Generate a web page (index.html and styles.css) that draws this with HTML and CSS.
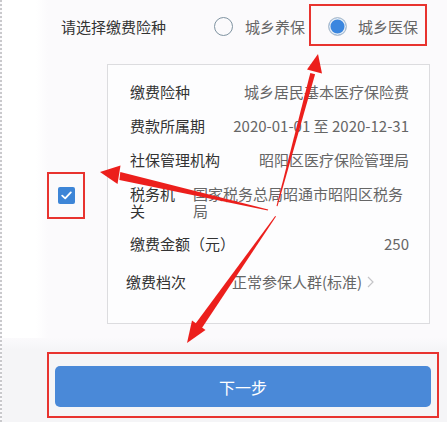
FILE: index.html
```html
<!DOCTYPE html>
<html lang="zh-CN">
<head>
<meta charset="utf-8">
<link rel="stylesheet" href="styles.css">
</head>
<body>
<div class="page">
  <div class="header">
    <span class="question">请选择缴费险种</span>
    <div class="opt">
      <span class="radio"></span>
      <span class="opt-label">城乡养保</span>
    </div>
    <div class="opt opt-marked">
      <span class="radio radio-on"></span>
      <span class="opt-label">城乡医保</span>
    </div>
  </div>

  <div class="middle">
    <div class="check-mark">
      <span class="checkbox">
        <svg width="11" height="9" viewBox="0 0 11 9"><path d="M1.2 4.6 L4.2 7.4 L9.8 1.4" fill="none" stroke="#fff" stroke-width="1.8" stroke-linecap="round" stroke-linejoin="round"/></svg>
      </span>
    </div>
    <div class="card">
      <div class="row">
        <span class="label">缴费险种</span>
        <span class="value">城乡居民基本医疗保险费</span>
      </div>
      <div class="row">
        <span class="label">费款所属期</span>
        <span class="value">2020-01-01 至 2020-12-31</span>
      </div>
      <div class="row">
        <span class="label">社保管理机构</span>
        <span class="value">昭阳区医疗保险管理局</span>
      </div>
      <div class="row row-wrap">
        <span class="label label-narrow">税务机关</span>
        <span class="value value-left">国家税务总局昭通市昭阳区税务局</span>
      </div>
      <div class="row">
        <span class="label">缴费金额（元）</span>
        <span class="value">250</span>
      </div>
      <div class="row row-grade">
        <span class="label">缴费档次</span>
        <span class="value grade-value">正常参保人群(标准)</span>
        <svg class="chevron" width="7" height="12" viewBox="0 0 7 12"><path d="M1 1 L6 6 L1 11" fill="none" stroke="#c4c4c8" stroke-width="1.2"/></svg>
      </div>
    </div>
  </div>

  <div class="footer">
    <div class="btn-mark">
      <button class="btn">下一步</button>
    </div>
  </div>

  <svg class="arrows" width="447" height="422" viewBox="0 0 447 422">
    <g fill="#ec1f1c">
      <polygon points="276.5,206 277.5,206.3 315.1,74.3 310.3,73 "/>
      <polygon points="318,54 322,73.5 307,69.5"/>
      <polygon points="268.2,209.5 267.8,210.5 119.4,180 120.3,172"/>
      <polygon points="100,172 120.5,165.5 117.5,184"/>
      <polygon points="276,216.5 275.2,216 195.6,323.5 201.6,328.4"/>
      <polygon points="187,343 192,320.5 205.5,330"/>
    </g>
  </svg>
</div>
</body>
</html>
```

FILE: styles.css
```css
* {
  box-sizing: border-box;
}

html, body {
  margin: 0;
  padding: 0;
  background: #ffffff;
}

.page {
  position: relative;
  width: 447px;
  height: 422px;
  overflow: hidden;
  border-left: 2px dotted #c9c9cc;
  background: linear-gradient(to right, #ffffff 0px, #ffffff 34px, #fbfafc 46px, #fbfafc 100%);
  font-family: "Noto Sans CJK SC", "Noto Sans", sans-serif;
  font-size: 15px;
  color: #333;
}

/* header */
.header {
  display: flex;
  align-items: center;
  padding: 4px 0 0 59px;
  height: 46px;
}

.question {
  color: #333;
  line-height: 20px;
  margin-top: 3px;
  width: 105px;
  white-space: nowrap;
}

.opt {
  display: flex;
  align-items: center;
  height: 42px;
}

.opt:first-of-type {
  margin-left: 48px;
}

.opt-label {
  color: #666;
  line-height: 20px;
  margin-top: 3px;
  white-space: nowrap;
}

.radio {
  width: 19px;
  height: 19px;
  border-radius: 50%;
  border: 1.5px solid #7f93a1;
  margin-right: 12px;
  margin-top: 3px;
  flex: none;
}

.radio-on {
  border: 1px solid #b9c4cf;
  background: #3b86df;
  box-shadow: inset 0 0 0 1.5px #e6ecf3;
  margin-right: 11px;
}

.opt-marked {
  margin-left: 4px;
  border: 2px solid #e8332f;
  padding: 0 7px 0 17px;
}

/* middle */
.middle {
  display: flex;
  align-items: center;
  margin-top: 18px;
  padding-left: 45px;
}

.check-mark {
  width: 38px;
  height: 47px;
  border: 2px solid #e8332f;
  display: flex;
  align-items: center;
  justify-content: center;
  margin-right: 22px;
  margin-top: 2px;
}

.checkbox {
  width: 17px;
  height: 17px;
  border-radius: 2px;
  background: #3d85d7;
  display: flex;
  align-items: center;
  justify-content: center;
}

.card {
  width: 323px;
  height: 260px;
  border: 1px solid #dcdcdf;
  background: #fdfdfe;
  padding: 10px 20px 0 22px;
}

.row {
  display: flex;
  justify-content: space-between;
  align-items: flex-start;
  padding: 8px 0;
  line-height: 18px;
}

.label {
  color: #333;
  white-space: nowrap;
}

.value {
  color: #666;
  white-space: nowrap;
}

.row-wrap {
  justify-content: flex-start;
  line-height: 17px;
}

.label-narrow {
  width: 48px;
  white-space: normal;
}

.value-left {
  flex: 1;
  margin-left: 15px;
  white-space: normal;
  text-align: left;
}

.row-grade {
  justify-content: flex-start;
  align-items: center;
  margin-top: 4px;
  margin-left: -4px;
}

.grade-value {
  margin-left: 46px;
}

.chevron {
  margin-left: 5px;
}

/* footer */
.footer {
  margin-top: 14px;
  padding: 14px 8px 4px 45px;
  background: linear-gradient(to bottom, #fbfafc 0px, #f5f5f7 12px, #f5f5f7 100%);
}

.btn-mark {
  border: 2px solid #e8332f;
  padding: 12px 6px 9px 6px;
}

.btn {
  display: block;
  width: 100%;
  height: 41px;
  border: none;
  border-radius: 5px;
  background: #4a89d8;
  color: #ffffff;
  font-family: "Noto Sans CJK SC", "Noto Sans", sans-serif;
  font-size: 16px;
  letter-spacing: 0;
  padding: 0;
}

/* annotation arrows overlaying content */
.arrows {
  position: absolute;
  left: -2px;
  top: 0;
  pointer-events: none;
}
```
